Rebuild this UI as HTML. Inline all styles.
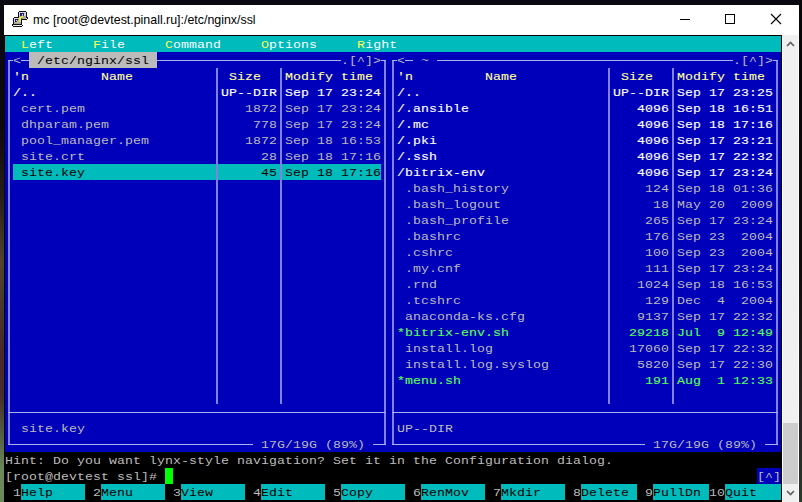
<!DOCTYPE html>
<html><head><meta charset="utf-8"><style>
html,body{margin:0;padding:0;}
body{width:802px;height:502px;overflow:hidden;position:relative;background:#1a1418;}
.desk{position:absolute;left:0;top:0;width:802px;height:502px;background:linear-gradient(180deg,#0a0810 0px,#100a0a 130px,#2a2018 200px,#54442c 262px,#4a3a2a 300px,#4a2a28 350px,#4a2c28 395px,#556040 435px,#6a8a5a 470px,#6a8a5a 502px);}
.desk2{position:absolute;left:799px;top:0;width:3px;height:502px;background:linear-gradient(180deg,#080608 0px,#100a0a 260px,#2a2428 430px,#2a3a2a 502px);}
.win{position:absolute;left:4px;top:5px;width:795px;height:497px;background:#ffffff;}
.term{position:absolute;left:4px;top:35px;width:778px;height:467px;background:#000;}
.sb{position:absolute;left:782px;top:35px;width:15px;height:467px;background:#f0f0f0;border-left:1px solid #fff;border-right:1px solid #fff;}
.thumb{position:absolute;left:783px;top:423px;width:15px;height:61px;background:#cdcdcd;}
.b{position:absolute;height:16px;}
.l{position:absolute;}
.r{position:absolute;left:5px;height:15px;overflow:hidden;line-height:16px;white-space:pre;font-family:"Liberation Mono",monospace;font-size:11.8px;letter-spacing:0.0629px;transform:scaleX(1.12);transform-origin:0 0;}
.bd{font-weight:normal;-webkit-text-stroke:0.12px currentColor;}
.title{position:absolute;left:33px;top:12px;font-family:"Liberation Sans",sans-serif;font-size:12.4px;line-height:16px;color:#000;white-space:pre;}
</style></head><body>
<div class="desk"></div><div class="desk2"></div>
<div class="win"></div>
<svg style="position:absolute;left:0px;top:0px" width="32" height="32" viewBox="0 0 32 32" shape-rendering="crispEdges">
 <rect x="19" y="11" width="7" height="1" fill="#111"/>
 <rect x="18" y="12" width="1" height="7" fill="#111"/>
 <rect x="26" y="12" width="1" height="6" fill="#111"/>
 <rect x="19" y="12" width="7" height="7" fill="#d4d4d4"/>
 <rect x="19" y="16" width="7" height="3" fill="#a8a8a8"/>
 <rect x="20" y="13" width="4" height="3" fill="#1c1c90"/>
 <rect x="22" y="14" width="1" height="1" fill="#e0e0ff"/>
 <rect x="21" y="19" width="6" height="1" fill="#111"/>
 <rect x="27" y="17" width="1" height="2" fill="#111"/>
 <rect x="14" y="17" width="7" height="1" fill="#111"/>
 <rect x="13" y="18" width="1" height="6" fill="#111"/>
 <rect x="21" y="18" width="1" height="6" fill="#111"/>
 <rect x="14" y="18" width="7" height="6" fill="#d4d4d4"/>
 <rect x="14" y="22" width="7" height="2" fill="#a8a8a8"/>
 <rect x="15" y="19" width="4" height="3" fill="#1c1c90"/>
 <rect x="16" y="20" width="1" height="1" fill="#e0e0ff"/>
 <rect x="12" y="24" width="10" height="1" fill="#111"/>
 <rect x="12" y="25" width="1" height="1" fill="#111"/>
 <rect x="22" y="25" width="1" height="1" fill="#111"/>
 <rect x="13" y="25" width="9" height="1" fill="#f4f4f4"/>
 <rect x="13" y="26" width="9" height="1" fill="#111"/>
 <path d="M17 22.5 L23 15.5" stroke="#e8e830" stroke-width="1.5" fill="none" shape-rendering="auto"/>
 <rect x="19" y="17" width="2" height="3" fill="#f4f440"/>
</svg>
<div class="title">mc [root@devtest.pinall.ru]:/etc/nginx/ssl</div>
<div style="position:absolute;left:680px;top:19px;width:10px;height:1px;background:#000"></div>
<div style="position:absolute;left:725px;top:14px;width:8px;height:8px;border:1px solid #000"></div>
<svg style="position:absolute;left:770px;top:13px" width="12" height="12" viewBox="0 0 12 12"><path d="M1 1L11 11M11 1L1 11" stroke="#000" stroke-width="1.1"/></svg>
<div class="term"></div>
<div class="sb"></div>
<div class="thumb"></div>
<svg style="position:absolute;left:784px;top:39px" width="13" height="10"><path d="M3 7L6.5 3.5L10 7" stroke="#606060" stroke-width="1.7" fill="none"/></svg>
<svg style="position:absolute;left:784px;top:488px" width="13" height="10"><path d="M3 3L6.5 6.5L10 3" stroke="#606060" stroke-width="1.7" fill="none"/></svg>
<div class="b" style="left:5px;top:36px;width:776px;background:#00bbbb"></div>
<div class="b" style="left:5px;top:52px;width:24px;background:#0000bb"></div>
<div class="b" style="left:29px;top:52px;width:128px;background:#bbbbbb"></div>
<div class="b" style="left:157px;top:52px;width:624px;background:#0000bb"></div>
<div class="b" style="left:5px;top:68px;width:776px;background:#0000bb"></div>
<div class="b" style="left:5px;top:84px;width:776px;background:#0000bb"></div>
<div class="b" style="left:5px;top:100px;width:776px;background:#0000bb"></div>
<div class="b" style="left:5px;top:116px;width:776px;background:#0000bb"></div>
<div class="b" style="left:5px;top:132px;width:776px;background:#0000bb"></div>
<div class="b" style="left:5px;top:148px;width:776px;background:#0000bb"></div>
<div class="b" style="left:5px;top:164px;width:8px;background:#0000bb"></div>
<div class="b" style="left:13px;top:164px;width:368px;background:#00bbbb"></div>
<div class="b" style="left:381px;top:164px;width:400px;background:#0000bb"></div>
<div class="b" style="left:5px;top:180px;width:776px;background:#0000bb"></div>
<div class="b" style="left:5px;top:196px;width:776px;background:#0000bb"></div>
<div class="b" style="left:5px;top:212px;width:776px;background:#0000bb"></div>
<div class="b" style="left:5px;top:228px;width:776px;background:#0000bb"></div>
<div class="b" style="left:5px;top:244px;width:776px;background:#0000bb"></div>
<div class="b" style="left:5px;top:260px;width:776px;background:#0000bb"></div>
<div class="b" style="left:5px;top:276px;width:776px;background:#0000bb"></div>
<div class="b" style="left:5px;top:292px;width:776px;background:#0000bb"></div>
<div class="b" style="left:5px;top:308px;width:776px;background:#0000bb"></div>
<div class="b" style="left:5px;top:324px;width:776px;background:#0000bb"></div>
<div class="b" style="left:5px;top:340px;width:776px;background:#0000bb"></div>
<div class="b" style="left:5px;top:356px;width:776px;background:#0000bb"></div>
<div class="b" style="left:5px;top:372px;width:776px;background:#0000bb"></div>
<div class="b" style="left:5px;top:388px;width:776px;background:#0000bb"></div>
<div class="b" style="left:5px;top:404px;width:776px;background:#0000bb"></div>
<div class="b" style="left:5px;top:420px;width:776px;background:#0000bb"></div>
<div class="b" style="left:5px;top:436px;width:776px;background:#0000bb"></div>
<div class="b" style="left:757px;top:468px;width:24px;background:#0000bb"></div>
<div class="b" style="left:21px;top:484px;width:64px;background:#00bbbb"></div>
<div class="b" style="left:101px;top:484px;width:64px;background:#00bbbb"></div>
<div class="b" style="left:181px;top:484px;width:64px;background:#00bbbb"></div>
<div class="b" style="left:261px;top:484px;width:64px;background:#00bbbb"></div>
<div class="b" style="left:341px;top:484px;width:64px;background:#00bbbb"></div>
<div class="b" style="left:421px;top:484px;width:64px;background:#00bbbb"></div>
<div class="b" style="left:501px;top:484px;width:64px;background:#00bbbb"></div>
<div class="b" style="left:581px;top:484px;width:56px;background:#00bbbb"></div>
<div class="b" style="left:653px;top:484px;width:56px;background:#00bbbb"></div>
<div class="b" style="left:725px;top:484px;width:56px;background:#00bbbb"></div>
<div class="b" style="left:165px;top:468px;width:8px;background:#00ff00"></div>
<div class="l" style="left:8px;top:60px;width:2px;height:385px;background:#8282da"></div>
<div class="l" style="left:384px;top:60px;width:2px;height:385px;background:#8282da"></div>
<div class="l" style="left:392px;top:60px;width:2px;height:385px;background:#8282da"></div>
<div class="l" style="left:776px;top:60px;width:2px;height:385px;background:#8282da"></div>
<div class="l" style="left:8px;top:60px;width:5px;height:1px;background:#aeaef2"></div>
<div class="l" style="left:21px;top:60px;width:8px;height:1px;background:#aeaef2"></div>
<div class="l" style="left:157px;top:60px;width:184px;height:1px;background:#aeaef2"></div>
<div class="l" style="left:381px;top:60px;width:5px;height:1px;background:#aeaef2"></div>
<div class="l" style="left:392px;top:60px;width:5px;height:1px;background:#aeaef2"></div>
<div class="l" style="left:405px;top:60px;width:8px;height:1px;background:#aeaef2"></div>
<div class="l" style="left:437px;top:60px;width:296px;height:1px;background:#aeaef2"></div>
<div class="l" style="left:773px;top:60px;width:5px;height:1px;background:#aeaef2"></div>
<div class="l" style="left:8px;top:412px;width:378px;height:1px;background:#aeaef2"></div>
<div class="l" style="left:392px;top:412px;width:386px;height:1px;background:#aeaef2"></div>
<div class="l" style="left:8px;top:444px;width:245px;height:1px;background:#aeaef2"></div>
<div class="l" style="left:373px;top:444px;width:13px;height:1px;background:#aeaef2"></div>
<div class="l" style="left:392px;top:444px;width:253px;height:1px;background:#aeaef2"></div>
<div class="l" style="left:765px;top:444px;width:13px;height:1px;background:#aeaef2"></div>
<div class="l" style="left:216px;top:68px;width:2px;height:336px;background:#8282da"></div>
<div class="l" style="left:280px;top:68px;width:2px;height:336px;background:#8282da"></div>
<div class="l" style="left:608px;top:68px;width:2px;height:336px;background:#8282da"></div>
<div class="l" style="left:672px;top:68px;width:2px;height:336px;background:#8282da"></div>
<div class="r" style="top:37px">  <span style="color:#ffff55">L</span><span style="color:#ffffff">eft</span>     <span style="color:#ffff55">F</span><span style="color:#ffffff">ile</span>     <span style="color:#ffff55">C</span><span style="color:#ffffff">ommand</span>     <span style="color:#ffff55">O</span><span style="color:#ffffff">ptions</span>     <span style="color:#ffff55">R</span><span style="color:#ffffff">ight</span>                                                </div><div class="r" style="top:53px"><span style="color:#bbbbbb"> &lt; </span><span style="color:#000000"> /etc/nginx/ssl </span><span style="color:#bbbbbb">                       .[^]&gt;  &lt;  ~                                      .[^]&gt; </span></div><div class="r" style="top:69px"> <span class="bd" style="color:#ffff99">&#x27;n</span>         <span class="bd" style="color:#ffff99">Name</span>            <span class="bd" style="color:#ffff99">Size</span>   <span class="bd" style="color:#ffff99">Modify time</span>   <span class="bd" style="color:#ffff99">&#x27;n</span>         <span class="bd" style="color:#ffff99">Name</span>             <span class="bd" style="color:#ffff99">Size</span>   <span class="bd" style="color:#ffff99">Modify time</span>  </div><div class="r" style="top:85px"> <span class="bd" style="color:#ffffff">/..</span>                       <span class="bd" style="color:#ffffff">UP--DIR</span> <span class="bd" style="color:#ffffff">Sep 17 23:24</span>  <span class="bd" style="color:#ffffff">/..</span>                        <span class="bd" style="color:#ffffff">UP--DIR</span> <span class="bd" style="color:#ffffff">Sep 17 23:25</span> </div><div class="r" style="top:101px"><span style="color:#bbbbbb">  cert.pem                    1872 Sep 17 23:24  </span><span class="bd" style="color:#ffffff">/.ansible</span>                     <span class="bd" style="color:#ffffff">4096</span> <span class="bd" style="color:#ffffff">Sep 18 16:51</span> </div><div class="r" style="top:117px"><span style="color:#bbbbbb">  dhparam.pem                  778 Sep 17 23:24  </span><span class="bd" style="color:#ffffff">/.mc</span>                          <span class="bd" style="color:#ffffff">4096</span> <span class="bd" style="color:#ffffff">Sep 18 17:16</span> </div><div class="r" style="top:133px"><span style="color:#bbbbbb">  pool_manager.pem            1872 Sep 18 16:53  </span><span class="bd" style="color:#ffffff">/.pki</span>                         <span class="bd" style="color:#ffffff">4096</span> <span class="bd" style="color:#ffffff">Sep 17 23:21</span> </div><div class="r" style="top:149px"><span style="color:#bbbbbb">  site.crt                      28 Sep 18 17:16  </span><span class="bd" style="color:#ffffff">/.ssh</span>                         <span class="bd" style="color:#ffffff">4096</span> <span class="bd" style="color:#ffffff">Sep 17 22:32</span> </div><div class="r" style="top:165px"> <span style="color:#000000"> site.key</span>                      <span style="color:#000000">45</span> <span style="color:#000000">Sep 18 17:16</span>  <span class="bd" style="color:#ffffff">/bitrix-env</span>                   <span class="bd" style="color:#ffffff">4096</span> <span class="bd" style="color:#ffffff">Sep 17 23:24</span> </div><div class="r" style="top:181px"><span style="color:#bbbbbb">                                                  .bash_history                 124 Sep 18 01:36 </span></div><div class="r" style="top:197px"><span style="color:#bbbbbb">                                                  .bash_logout                   18 May 20  2009 </span></div><div class="r" style="top:213px"><span style="color:#bbbbbb">                                                  .bash_profile                 265 Sep 17 23:24 </span></div><div class="r" style="top:229px"><span style="color:#bbbbbb">                                                  .bashrc                       176 Sep 23  2004 </span></div><div class="r" style="top:245px"><span style="color:#bbbbbb">                                                  .cshrc                        100 Sep 23  2004 </span></div><div class="r" style="top:261px"><span style="color:#bbbbbb">                                                  .my.cnf                       111 Sep 17 23:24 </span></div><div class="r" style="top:277px"><span style="color:#bbbbbb">                                                  .rnd                         1024 Sep 18 16:53 </span></div><div class="r" style="top:293px"><span style="color:#bbbbbb">                                                  .tcshrc                       129 Dec  4  2004 </span></div><div class="r" style="top:309px"><span style="color:#bbbbbb">                                                  anaconda-ks.cfg              9137 Sep 17 22:32 </span></div><div class="r" style="top:325px">                                                 <span class="bd" style="color:#55ff55">*bitrix-env.sh</span>               <span class="bd" style="color:#55ff55">29218</span> <span class="bd" style="color:#55ff55">Jul  9 12:49</span> </div><div class="r" style="top:341px"><span style="color:#bbbbbb">                                                  install.log                 17060 Sep 17 22:32 </span></div><div class="r" style="top:357px"><span style="color:#bbbbbb">                                                  install.log.syslog           5820 Sep 17 22:30 </span></div><div class="r" style="top:373px">                                                 <span class="bd" style="color:#55ff55">*menu.sh</span>                       <span class="bd" style="color:#55ff55">191</span> <span class="bd" style="color:#55ff55">Aug  1 12:33</span> </div><div class="r" style="top:389px">                                                                                                 </div><div class="r" style="top:405px">                                                                                                 </div><div class="r" style="top:421px"><span style="color:#bbbbbb">  site.key                                       UP--DIR                                         </span></div><div class="r" style="top:437px"><span style="color:#bbbbbb">                                17G/19G (89%)                                    17G/19G (89%)   </span></div><div class="r" style="top:453px"><span style="color:#bbbbbb">Hint: Do you want lynx-style navigation? Set it in the Configuration dialog.                     </span></div><div class="r" style="top:469px"><span style="color:#bbbbbb">[root@devtest ssl]#                                                                           [^]</span></div><div class="r" style="top:485px"><span style="color:#bbbbbb"> 1</span><span style="color:#000000">Help</span><span style="color:#bbbbbb">     2</span><span style="color:#000000">Menu</span><span style="color:#bbbbbb">     3</span><span style="color:#000000">View</span><span style="color:#bbbbbb">     4</span><span style="color:#000000">Edit</span><span style="color:#bbbbbb">     5</span><span style="color:#000000">Copy</span><span style="color:#bbbbbb">     6</span><span style="color:#000000">RenMov</span><span style="color:#bbbbbb">   7</span><span style="color:#000000">Mkdir</span><span style="color:#bbbbbb">    8</span><span style="color:#000000">Delete</span><span style="color:#bbbbbb">  9</span><span style="color:#000000">PullDn</span><span style="color:#bbbbbb"> 10</span><span style="color:#000000">Quit</span>   </div>
</body></html>
